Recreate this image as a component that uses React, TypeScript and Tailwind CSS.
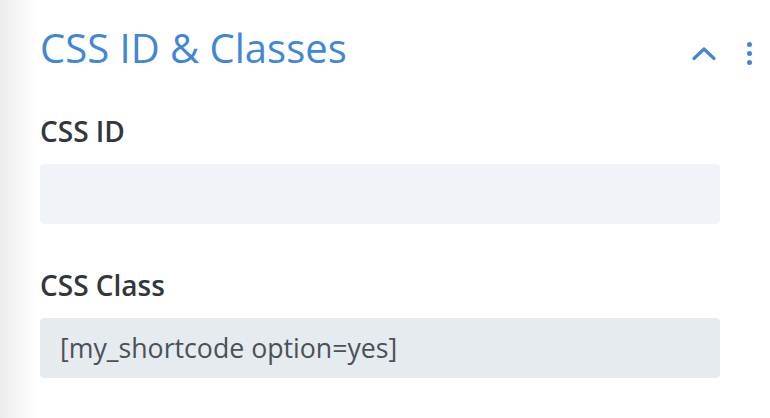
export default function App() {
  return (
    <div
      className="w-[770px] h-[418px] overflow-hidden bg-[linear-gradient(to_right,#ececec,#ffffff_36px)]"
      style={{ fontFamily: '"Open Sans", sans-serif' }}
    >
      <div className="pl-[40px] pr-[50px]">
        <div className="flex items-start justify-between pt-[28px]">
          <h2 className="text-[40px] leading-[40px] font-normal text-[#4187d6]">CSS ID &amp; Classes</h2>
          <div className="flex items-center gap-[31px] -mr-[32px] mt-[14px]">
            <svg width="24" height="14" viewBox="0 0 24 14" fill="none">
              <path d="M2 11.5 L12 2 L22 11.5" stroke="#4187d6" strokeWidth="3.2" strokeLinecap="round" strokeLinejoin="round" />
            </svg>
            <div className="flex flex-col gap-[4px]">
              <span className="block w-[5px] h-[5px] rounded-full bg-[#4187d6]" />
              <span className="block w-[5px] h-[5px] rounded-full bg-[#4187d6]" />
              <span className="block w-[5px] h-[5px] rounded-full bg-[#4187d6]" />
            </div>
          </div>
        </div>
        <div className="mt-[49px] text-[28px] leading-[28px] font-semibold text-[#32373c]">CSS ID</div>
        <div className="mt-[19px] h-[60px] rounded-[4px] bg-[#f0f4f9]" />
        <div className="mt-[47px] text-[28px] leading-[28px] font-semibold text-[#32373c]">CSS Class</div>
        <div className="mt-[19px] h-[60px] rounded-[4px] bg-[#e6ebf0] flex items-center pl-[20px] text-[26.7px] leading-[26px] text-[#4b5159]">
          [my_shortcode option=yes]
        </div>
      </div>
    </div>
  );
}
